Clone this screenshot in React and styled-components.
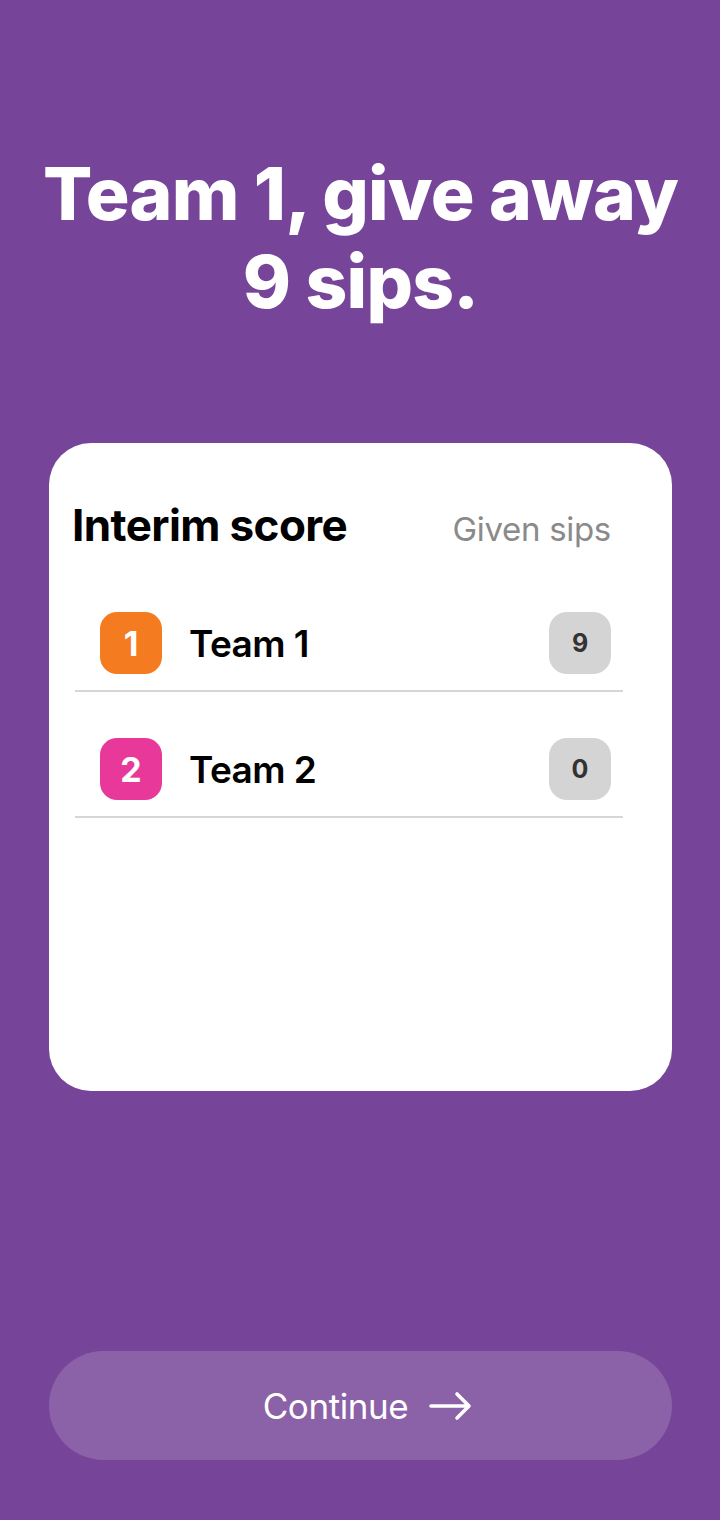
import React from "react";
import styled, { createGlobalStyle } from "styled-components";

const teams = [
    { id: 1, name: "Team 1", color: "#f57b20", sips: 9 },
    { id: 2, name: "Team 2", color: "#e8399a", sips: 0 },
];

const App = () => {
    return (
        <Page>
            <GlobalStyle />
            <Title>Team 1, give away<br />9 sips.</Title>
            <Card>
                <CardHeader>
                    <CardTitle>Interim score</CardTitle>
                    <ColumnLabel>Given sips</ColumnLabel>
                </CardHeader>
                {teams.map(team => (
                    <Row key={team.id}>
                        <Badge color={team.color}>{team.id}</Badge>
                        <TeamName>{team.name}</TeamName>
                        <Score>{team.sips}</Score>
                    </Row>
                ))}
            </Card>
            <ContinueButton type="button">
                Continue
                <svg width="44" height="30" viewBox="0 0 44 30" fill="none">
                    <path d="M3 15h38M29 3l12 12-12 12" stroke="#fff" strokeWidth="3.6" strokeLinecap="round" strokeLinejoin="round" />
                </svg>
            </ContinueButton>
        </Page>
    );
};

export default App;

const GlobalStyle = createGlobalStyle`
    html, body {
        margin: 0;
        padding: 0;
        background: #764499;
    }
    * {
        box-sizing: border-box;
    }
`

const Page = styled.div`
    min-height: 1520px;
    display: flex;
    flex-direction: column;
    padding: 0 48px 60px 49px;
    font-family: Inter, "Noto Sans", sans-serif;
`

const Title = styled.h1`
    margin: 150px -24px 0;
    color: #fff;
    font-size: 73px;
    font-weight: 800;
    line-height: 88px;
    letter-spacing: -0.8px;
    text-align: center;
`

const Card = styled.div`
    margin-top: 117px;
    height: 648px;
    background: #fff;
    border-radius: 42px;
    padding: 55px 49px 0 26px;
`

const CardHeader = styled.div`
    display: flex;
    justify-content: space-between;
    align-items: baseline;
    padding: 0 12px 0 0;
    margin-left: -3px;
`

const CardTitle = styled.h2`
    margin: 0;
    font-size: 44px;
    font-weight: 700;
    line-height: 54px;
    letter-spacing: -0.6px;
    color: #000;
`

const ColumnLabel = styled.span`
    font-size: 33px;
    color: #8a8a8a;
    letter-spacing: -0.3px;
`

const Row = styled.div`
    display: flex;
    align-items: center;
    padding: 60px 12px 16px 25px;
    border-bottom: 2px solid #d6d6d6;

    & + & {
        padding-top: 46px;
    }
`

const Badge = styled.div`
    width: 62px;
    height: 62px;
    border-radius: 17px;
    background: ${({color}) => color};
    color: #fff;
    display: flex;
    align-items: center;
    justify-content: center;
    font-size: 34px;
    font-weight: 700;
`

const TeamName = styled.span`
    flex: 1;
    margin-left: 27px;
    font-size: 37px;
    font-weight: 600;
    letter-spacing: -0.6px;
    color: #000;
`

const Score = styled.div`
    width: 62px;
    height: 62px;
    border-radius: 18px;
    background: #d4d4d4;
    color: #333;
    display: flex;
    align-items: center;
    justify-content: center;
    font-size: 25px;
    font-weight: 700;
`

const ContinueButton = styled.button`
    margin-top: auto;
    height: 109px;
    border: none;
    border-radius: 55px;
    background: #8b62a8;
    color: #fff;
    font-family: Inter, "Noto Sans", sans-serif;
    font-size: 35px;
    letter-spacing: -0.4px;
    display: flex;
    align-items: center;
    justify-content: center;
    gap: 20px;
    padding-left: 20px;
`
